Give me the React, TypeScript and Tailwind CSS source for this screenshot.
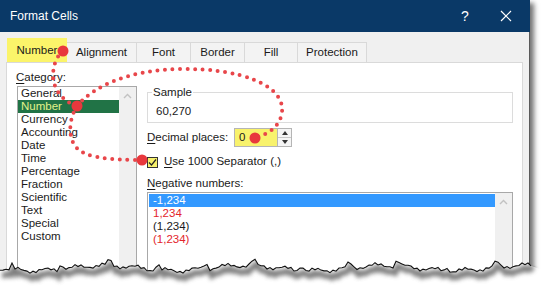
import React from "react";

const categories = [
  "General",
  "Number",
  "Currency",
  "Accounting",
  "Date",
  "Time",
  "Percentage",
  "Fraction",
  "Scientific",
  "Text",
  "Special",
  "Custom",
];

const negatives = [
  { text: "-1,234", cls: "bg-[#3399ff] text-white" },
  { text: "1,234", cls: "text-[#e3242b]" },
  { text: "(1,234)", cls: "text-[#1a1a1a]" },
  { text: "(1,234)", cls: "text-[#e3242b]" },
];

const tabs = [
  { label: "Alignment", w: "w-[70px]" },
  { label: "Font", w: "w-[54px]" },
  { label: "Border", w: "w-[54px]" },
  { label: "Fill", w: "w-[53px]" },
  { label: "Protection", w: "w-[69px]" },
];

// jagged torn-paper edge, local coords of the bottom svg
const tearPoints = (() => {
  const pts: string[] = [];
  for (let x = 0; x <= 532; x += 3) {
    const y =
      13 +
      2.6 * Math.sin(x * 0.045) +
      1.8 * Math.sin(x * 0.21 + 1.3) +
      1.1 * Math.sin(x * 0.9 + 0.4) -
      (Math.sin(x * 0.13) > 0.93 ? 4 : 0);
    pts.push(`${x},${y.toFixed(1)}`);
  }
  return pts;
})();

function ScrollUp() {
  return (
    <svg width="9" height="6" viewBox="0 0 9 6" className="mx-auto mt-[6px]">
      <path d="M1,5 L4.5,1.5 L8,5" fill="none" stroke="#c2c2c2" strokeWidth="1.4" />
    </svg>
  );
}

function Ul({ c }: { c: string }) {
  return <span className="underline underline-offset-2">{c}</span>;
}

export default function App() {
  return (
    <div className="relative w-[545px] h-[296px] overflow-hidden bg-white font-['Liberation_Sans',Arial,sans-serif] text-[11.5px] text-[#1a1a1a]">
      <div className="w-[530px] h-[296px] flex flex-col shadow-[4px_3px_5px_rgba(0,0,0,0.55)]">
        {/* title bar */}
        <div className="h-[32px] bg-[#0a3967] flex items-center text-white pl-[10px]">
          <span className="text-[12px] flex-1">Format Cells</span>
          <span className="text-[14px] w-[20px] text-center mr-[25px]">?</span>
          <svg width="12" height="12" viewBox="0 0 12 12" className="mr-[18px]">
            <path d="M1,1 L11,11 M11,1 L1,11" stroke="white" strokeWidth="1.2" />
          </svg>
        </div>

        <div className="flex-1 flex flex-col bg-[#f0f0f0] px-[6px] border-r border-[#5a5a5a]">
          {/* tabs */}
          <div className="h-[30px] flex items-end pl-[1px]">
            <div className="w-[60px] h-[24px] bg-[#fbf46a] flex items-center justify-center pt-[2px]">
              Number
            </div>
            {tabs.map((t) => (
              <div
                key={t.label}
                className={`${t.w} h-[20px] flex items-center justify-center border border-b-0 border-l-0 border-[#d9d9d9] bg-[#f3f3f3]`}
              >
                {t.label}
              </div>
            ))}
          </div>

          {/* panel */}
          <div className="flex-1 bg-white border border-[#d9d9d9] flex pl-[10px] pt-[7px]">
            <div className="w-[120px] flex flex-col">
              <div className="leading-[14px] -ml-[1px]">
                <Ul c="C" />
                ategory:
              </div>
              <div className="mt-[2px] h-[200px] border border-[#a8a8a8] flex">
                <div className="flex-1 flex flex-col">
                  {categories.map((c) => (
                    <div
                      key={c}
                      className={`h-[13px] leading-[13px] pl-[3px] ${
                        c === "Number" ? "bg-[#217346] text-[#e2f28a]" : ""
                      }`}
                    >
                      {c}
                    </div>
                  ))}
                </div>
                <div className="w-[17px] bg-[#f0f0f0]">
                  <ScrollUp />
                </div>
              </div>
            </div>

            <div className="w-[366px] ml-[10px] flex flex-col">
              <fieldset className="mt-[15px] h-[38px] border border-[#dcdcdc] px-[8px]">
                <legend className="-ml-[4px] px-[1px] leading-[14px]">Sample</legend>
                <div className="mt-[5px] leading-[14px]">60,270</div>
              </fieldset>

              <div className="mt-[5px] h-[19px] flex items-center">
                <div className="w-[87px]">
                  <Ul c="D" />
                  ecimal places:
                </div>
                <div className="h-[19px] flex border border-[#b5b5b5]">
                  <div className="w-[42px] bg-[#f8f26c] pl-[4px] flex items-center">0</div>
                  <div className="w-[14px] flex flex-col border-l border-[#b5b5b5] bg-[#f5f5f5]">
                    <div className="flex-1 flex items-center justify-center border-b border-[#c8c8c8]">
                      <svg width="6" height="4" viewBox="0 0 6 4">
                        <path d="M0,4 L3,0 L6,4 Z" fill="#333" />
                      </svg>
                    </div>
                    <div className="flex-1 flex items-center justify-center">
                      <svg width="6" height="4" viewBox="0 0 6 4">
                        <path d="M0,0 L6,0 L3,4 Z" fill="#333" />
                      </svg>
                    </div>
                  </div>
                </div>
              </div>

              <div className="mt-[8px] h-[14px] flex items-center">
                <div className="w-[11px] h-[11px] border border-[#333] bg-[#f6f06a] flex items-center justify-center">
                  <svg width="9" height="9" viewBox="0 0 9 9">
                    <path d="M1,4.5 L3.5,7 L8,1.5" fill="none" stroke="#222" strokeWidth="1.2" />
                  </svg>
                </div>
                <div className="ml-[6px]">
                  <Ul c="U" />
                  se 1000 Separator (,)
                </div>
              </div>

              <div className="mt-[7px] leading-[14px]">
                <Ul c="N" />
                egative numbers:
              </div>
              <div className="mt-[2px] h-[100px] border border-[#a8a8a8] flex">
                <div className="flex-1 flex flex-col pt-[1px] pl-[1px]">
                  {negatives.map((n, i) => (
                    <div key={i} className={`h-[13px] leading-[13px] pl-[4px] ${n.cls}`}>
                      {n.text}
                    </div>
                  ))}
                </div>
                <div className="w-[17px] bg-[#f0f0f0]">
                  <ScrollUp />
                </div>
              </div>
            </div>
          </div>
        </div>
      </div>

      {/* torn bottom edge */}
      <svg
        className="absolute left-0 top-[255px]"
        width="545"
        height="41"
        viewBox="0 0 545 41"
      >
        <defs>
          <filter id="blur" x="-10%" y="-100%" width="120%" height="300%">
            <feGaussianBlur stdDeviation="2.2" />
          </filter>
          <clipPath id="below">
            <polygon points={`${tearPoints.join(" ")} 545,${tearPoints[tearPoints.length - 1].split(",")[1]} 545,41 0,41`} />
          </clipPath>
        </defs>
        <polygon
          points={`0,0 ${tearPoints.join(" ")} 545,14 545,41 0,41`}
          fill="none"
        />
        <polygon
          points={`${tearPoints.join(" ")} 545,16 545,41 0,41`}
          fill="white"
        />
        <g clipPath="url(#below)">
          <polyline
            points={tearPoints.join(" ")}
            transform="translate(2,5)"
            fill="none"
            stroke="#555"
            strokeWidth="6"
            opacity="0.75"
            filter="url(#blur)"
          />
        </g>
        <polyline points={tearPoints.join(" ")} fill="none" stroke="#111" strokeWidth="1.1" />
      </svg>

      {/* red dotted callouts */}
      <svg className="absolute inset-0 pointer-events-none" width="545" height="296" viewBox="0 0 545 296">
        <g fill="none" stroke="#e8464a" strokeWidth="4" strokeLinecap="round" strokeDasharray="0 7.5">
          <path d="M63,51 C52,60 50,80 58,92 C64,100 70,104 77,106" />
          <path d="M77,106 C95,85 130,70 180,69 C240,68 285,85 282,112 C280,128 266,135 255,138" />
          <path d="M77,106 C68,120 66,145 84,153 C100,160 125,160 142,160" />
        </g>
        <g fill="#e8383d">
          <circle cx="63" cy="51" r="5.5" />
          <circle cx="77" cy="106" r="5.5" />
          <circle cx="255" cy="138" r="5.5" />
          <circle cx="142" cy="160" r="5.5" />
        </g>
      </svg>
    </div>
  );
}
